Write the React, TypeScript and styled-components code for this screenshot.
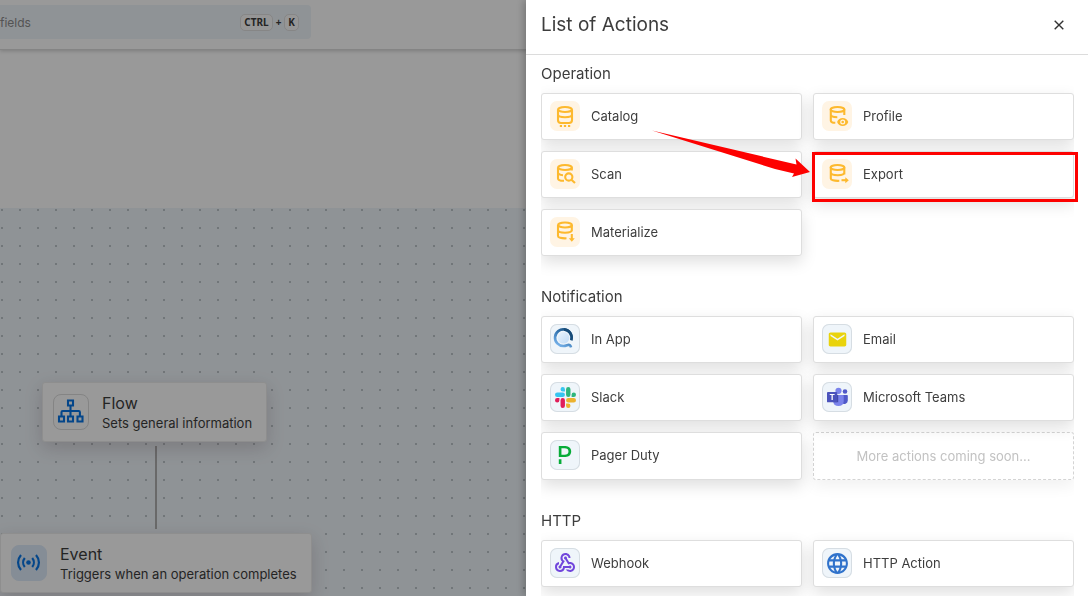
import React from "react";
import styled, { createGlobalStyle } from "styled-components";
import { MdEmail, MdLanguage, MdWebhook } from "react-icons/md";
import { SiPagerduty } from "react-icons/si";

const GlobalStyle = createGlobalStyle`
  * { box-sizing: border-box; }
  html, body, #root { height: 100%; }
  body {
    margin: 0;
    overflow: hidden;
    font-family: Inter, "Liberation Sans", sans-serif;
    color: #3d3d3d;
    background: #fff;
  }
  button, input { font: inherit; color: inherit; }
`;

const Page = styled.div`
  display: flex;
  flex-direction: column;
  min-height: 100%;
`;

const TopBar = styled.header`
  display: flex;
  height: 50px;
  padding: 5px 0 10px;
  border-bottom: 1px solid #dcdcdc;
  box-shadow: 0 1px 4px rgba(0, 0, 0, 0.2);
`;

const SearchBox = styled.label`
  display: flex;
  align-items: center;
  gap: 3px;
  width: 311px;
  height: 34px;
  padding-right: 12px;
  border-radius: 0 4px 4px 0;
  background: #eff5fa;
`;

const SearchInput = styled.input`
  flex: 1;
  min-width: 0;
  padding: 0;
  border: 0;
  background: none;
  font-size: 12px;
  &::placeholder { color: #8c8c8c; opacity: 1; }
`;

const Key = styled.kbd`
  padding: 0 3px;
  border: 1px solid #dfdfdf;
  border-radius: 5px;
  background: #fbfbfb;
  font: bold 10px/15px "Noto Sans", sans-serif;
`;

const Plus = styled.span`
  font: bold 10px/15px "Noto Sans", sans-serif;
`;

const Summary = styled.div`
  height: 158px;
`;

const Canvas = styled.main`
  position: relative;
  flex: 1;
  min-height: 388px;
  overflow: hidden;
  background: radial-gradient(circle, #bdc5ca 1px, transparent 1px) -7px -7px / 18px 18px #eff5fa;
`;

const Node = styled.article<{ $x: number; $y: number }>`
  position: absolute;
  left: ${(p) => p.$x}px;
  top: ${(p) => p.$y}px;
  display: flex;
  gap: 13px;
  height: 60px;
  padding: 11px 14px 11px 10px;
  border: 1px solid #ededed;
  border-radius: 3px;
  background: #fff;
  box-shadow: 0 6px 18px rgba(60, 30, 40, 0.18);
`;

const NodeIcon = styled.div<{ $tinted?: boolean }>`
  width: 36px;
  height: 36px;
  border: 1px solid ${(p) => (p.$tinted ? "#deebfa" : "#dcdcdc")};
  border-radius: 8px;
  background: ${(p) => (p.$tinted ? "#deebfa" : "#fff")};
  svg { display: block; margin: -1px; }
`;

const NodeTitle = styled.h3`
  margin: 0;
  font-size: 16px;
  line-height: 18px;
  font-weight: 400;
`;

const NodeText = styled.p`
  margin: 0;
  font-size: 13px;
  line-height: 22px;
  white-space: nowrap;
`;

const Edge = styled.div`
  position: absolute;
  left: 155px;
  top: 238px;
  width: 2px;
  height: 83px;
  background: #b0b0b0;
`;

const Backdrop = styled.div`
  position: fixed;
  inset: 0;
  background: rgba(0, 0, 0, 0.4);
`;

const Drawer = styled.aside`
  position: fixed;
  inset: 0 0 0 auto;
  display: flex;
  flex-direction: column;
  width: min(562px, 100%);
  background: #fff;
  box-shadow: -2px 0 8px rgba(0, 0, 0, 0.25);
`;

const DrawerHeader = styled.header`
  display: flex;
  align-items: center;
  justify-content: space-between;
  flex: none;
  height: 55px;
  padding: 0 20px 4px 15px;
  border-bottom: 1px solid #dcdcdc;
`;

const DrawerTitle = styled.h1`
  margin: 0;
  font-size: 19px;
  line-height: 28px;
  font-weight: 400;
`;

const CloseButton = styled.button`
  display: flex;
  padding: 4px;
  border: 0;
  background: none;
`;

/* The side gutters cover the card shadows, so only the gaps between cards are shaded. */
const DrawerBody = styled.div`
  position: relative;
  flex: 1;
  min-height: 0;
  padding: 0 14px 0 15px;
  overflow: hidden;
  &::before, &::after {
    content: "";
    position: absolute;
    z-index: 1;
    top: 0;
    bottom: 0;
    background: #fff;
  }
  &::before { left: 0; width: 15px; }
  &::after { right: 0; width: 14px; }
`;

const Section = styled.section`
  padding-top: 8px;
  & + & { padding-top: 30px; }
`;

const SectionTitle = styled.h2`
  margin: 0 0 8px;
  font-size: 15px;
  line-height: 22px;
  font-weight: 400;
`;

const Grid = styled.div`
  display: grid;
  grid-template-columns: 1fr 1fr;
  gap: 11px;
`;

const Card = styled.button`
  position: relative;
  display: flex;
  align-items: flex-start;
  gap: 11px;
  min-height: 47px;
  padding: 7px 8px;
  border: 1px solid #dedede;
  border-radius: 3px;
  background: #fff;
  box-shadow: 0 6px 16px rgba(0, 0, 0, 0.13);
  font-size: 13px;
  line-height: 30px;
  text-align: left;
`;

const Soon = styled.div`
  display: flex;
  align-items: center;
  justify-content: center;
  min-height: 48px;
  border: 1px dashed #d4d4d4;
  border-radius: 3px;
  background: #fff;
  box-shadow: 0 6px 16px rgba(0, 0, 0, 0.06);
  color: #c2c2c2;
  font-size: 13px;
`;

const Tile = styled.span<{ $warm?: boolean }>`
  display: flex;
  align-items: center;
  justify-content: center;
  flex: none;
  width: 30px;
  height: 30px;
  border-radius: 7px;
  background: ${(p) => (p.$warm ? "#fff4e4" : "#eff5fa")};
  box-shadow: ${(p) => (p.$warm ? "none" : "inset 0 0 0 1px #d6dde3")};
  svg { flex: none; display: block; }
`;

const Highlight = styled.span`
  position: absolute;
  z-index: 2;
  inset: 0 -5px -5px -2px;
  border: 3px solid #fd0100;
  pointer-events: none;
`;

const Arrow = styled.svg`
  position: absolute;
  right: 100%;
  top: -22px;
  margin-right: 4px;
  pointer-events: none;
`;

type DbKind = "catalog" | "profile" | "scan" | "export" | "materialize";

const dbExtras: Record<DbKind, React.ReactNode> = {
  catalog: (
    <>
      <path d="M8 8.500v10.500c0 2 1 3 3 3h8c2 0 3-1 3-3V8.500M8 13.500c0 1.800 3 2.700 7 2.700s7-.9 7-2.700" />
      <path d="M9.800 25h2.200M13.900 25h2.200M18 25h2.200" />
    </>
  ),
  profile: (
    <>
      <path d="M8.800 8.500v11c0 1.300 2 2.300 4.500 2.300M22.300 8.500v5.500M8.800 13.500c0 1.800 2.500 2.700 6.500 2.700" />
      <path fill="#fdb92e" stroke="none" fillRule="evenodd" d="M20.700 17c2.500 0 4.700 1.600 5.600 4-.9 2.400-3.100 4-5.600 4s-4.700-1.600-5.600-4c.9-2.400 3.100-4 5.600-4zm0 1.500a2.500 2.500 0 1 0 0 5 2.500 2.500 0 0 0 0-5zm0 1.200a1.300 1.300 0 1 1 0 2.600 1.300 1.300 0 0 1 0-2.600z" />
    </>
  ),
  scan: (
    <>
      <path d="M8 8.500v11c0 1.500 2.500 2.300 6 2.300M21.800 8.500v3M8 13.500c0 1.600 2 2.500 5 2.700" />
      <circle cx="18.800" cy="18" r="3.600" />
      <path d="M21.400 20.700l3.600 3.400" />
    </>
  ),
  export: (
    <>
      <path d="M8.800 8.500v11c0 1.600 3 2.500 8.500 2.300M22.300 8.500v7M8.800 13.500c0 1.800 3 2.700 7 2.700s6.500-.9 6.500-2.700" />
      <path d="M19.500 21.200h4.500" />
      <path fill="#fdb92e" stroke="none" d="M23.300 18.200l3.500 3-3.500 3z" />
    </>
  ),
  materialize: (
    <>
      <path d="M8 8v11c0 1.600 3 2.500 8.500 2.300M21.800 8v6M8 13c0 1.800 3 2.700 7 2.700s6.800-.9 6.800-2.700" />
      <path d="M21.800 17v5" />
      <path fill="#fdb92e" stroke="none" d="M18.800 21.300h6L21.800 24.700z" />
    </>
  ),
};

const DatabaseIcon = ({ kind }: { kind: DbKind }) => (
  <svg width="30" height="30" viewBox="0 0 30 30" fill="none" stroke="#fdb92e" strokeWidth="2.100">
    <ellipse cx={kind === "profile" || kind === "export" ? 15.5 : 15} cy={kind === "materialize" ? 8 : 8.5} rx="6.900" ry="2.500" />
    {dbExtras[kind]}
  </svg>
);

const InAppIcon = () => (
  <svg width="30" height="30" viewBox="0 0 30 30" fill="none">
    <defs>
      <linearGradient id="ring" x1="20" y1="5" x2="9" y2="23" gradientUnits="userSpaceOnUse">
        <stop offset="0" stopColor="#174b78" />
        <stop offset="0.450" stopColor="#3778b4" />
        <stop offset="1" stopColor="#7bb6ee" />
      </linearGradient>
      <linearGradient id="lens" x1="8" y1="8" x2="19" y2="19" gradientUnits="userSpaceOnUse">
        <stop offset="0" stopColor="#eaf4fd" />
        <stop offset="1" stopColor="#c2dcf6" />
      </linearGradient>
    </defs>
    <circle cx="13.500" cy="13.800" r="5.800" fill="url(#lens)" />
    <path d="M21.300 16A8.300 8.300 0 1 0 13.500 22c3.300 0 4.500-1.900 6.200-.9.700.4 1 1.200 1.400 2.300" stroke="url(#ring)" strokeWidth="2.600" />
    <path d="M21.300 16.300A8.300 8.300 0 0 0 14 5.400" stroke="#174b78" strokeWidth="2.600" />
  </svg>
);

const SlackIcon = () => (
  <svg width="21" height="21" viewBox="0 0 24 24">
    <path fill="#e01e5a" d="M5.042 15.165a2.528 2.528 0 0 1-2.520 2.523A2.528 2.528 0 0 1 0 15.165a2.527 2.527 0 0 1 2.522-2.520h2.520v2.520zM6.313 15.165a2.527 2.527 0 0 1 2.521-2.520 2.527 2.527 0 0 1 2.521 2.520v6.313A2.528 2.528 0 0 1 8.834 24a2.528 2.528 0 0 1-2.521-2.522v-6.313z" />
    <path fill="#36c5f0" d="M8.834 5.042a2.528 2.528 0 0 1-2.521-2.520A2.528 2.528 0 0 1 8.834 0a2.528 2.528 0 0 1 2.521 2.522v2.520H8.834zM8.834 6.313a2.528 2.528 0 0 1 2.521 2.521 2.528 2.528 0 0 1-2.521 2.521H2.522A2.528 2.528 0 0 1 0 8.834a2.528 2.528 0 0 1 2.522-2.521h6.312z" />
    <path fill="#2eb67d" d="M18.956 8.834a2.528 2.528 0 0 1 2.522-2.521A2.528 2.528 0 0 1 24 8.834a2.528 2.528 0 0 1-2.522 2.521h-2.522V8.834zM17.688 8.834a2.528 2.528 0 0 1-2.523 2.521 2.527 2.527 0 0 1-2.520-2.521V2.522A2.527 2.527 0 0 1 15.165 0a2.528 2.528 0 0 1 2.523 2.522v6.312z" />
    <path fill="#ecb22e" d="M15.165 18.956a2.528 2.528 0 0 1 2.523 2.522A2.528 2.528 0 0 1 15.165 24a2.527 2.527 0 0 1-2.520-2.522v-2.522h2.520zM15.165 17.688a2.527 2.527 0 0 1-2.520-2.523 2.526 2.526 0 0 1 2.520-2.520h6.313A2.527 2.527 0 0 1 24 15.165a2.528 2.528 0 0 1-2.522 2.523h-6.313z" />
  </svg>
);

const TeamsIcon = () => (
  <svg width="30" height="30" viewBox="0 0 30 30">
    <circle cx="23" cy="9.500" r="2.300" fill="#5059c9" />
    <path d="M19.500 13H25a.8.8 0 0 1 .8.800v4.700a3.500 3.500 0 0 1-6 2.400z" fill="#5059c9" />
    <circle cx="16.500" cy="8.800" r="3.100" fill="#7b83eb" />
    <path d="M11.500 13h9.400a.8.8 0 0 1 .8.800v5.600a5.300 5.300 0 0 1-10.500 0z" fill="#7b83eb" />
    <path d="M11.300 13h4.900v7.200h-4.900z" fill="#4048a5" />
    <rect x="5" y="10" width="10.300" height="10.300" rx="0.900" fill="#4b53bc" />
    <text x="10.200" y="18" textAnchor="middle" fontFamily="Inter, sans-serif" fontSize="8" fontWeight="700" fill="#fff">T</text>
  </svg>
);

const FlowIcon = () => (
  <svg width="36" height="36" viewBox="0 0 36 36" fill="none" stroke="#0876e6" strokeWidth="2.100">
    <path d="M15 6.500h5v5h-5zM6 22.500h5v5H6zM15 22.500h5v5h-5zM24.500 22.500h5v5h-5z" />
    <path d="M17.500 11.500v11M8.500 22.500V18.200c0-.8.400-1.200 1.200-1.200h16c.8 0 1.200.4 1.200 1.200v4.300" />
  </svg>
);

const EventIcon = () => (
  <svg width="36" height="36" viewBox="0 0 36 36" fill="none" stroke="#0876e6" strokeWidth="2.200">
    <circle cx="17.500" cy="17.500" r="2.300" fill="#0876e6" stroke="none" />
    <path d="M13.800 13c-2.200 2.600-2.200 6.400 0 9M21.200 13c2.200 2.600 2.200 6.400 0 9M10 10c-3.900 4.400-3.900 10.600 0 15M25 10c3.900 4.400 3.900 10.600 0 15" />
  </svg>
);

interface Action {
  label: string;
  icon: React.ReactNode;
  warm?: boolean;
  highlighted?: boolean;
}

const sections: { title: string; actions: Action[]; more?: string }[] = [
  {
    title: "Operation",
    actions: [
      { label: "Catalog", icon: <DatabaseIcon kind="catalog" />, warm: true },
      { label: "Profile", icon: <DatabaseIcon kind="profile" />, warm: true },
      { label: "Scan", icon: <DatabaseIcon kind="scan" />, warm: true },
      { label: "Export", icon: <DatabaseIcon kind="export" />, warm: true, highlighted: true },
      { label: "Materialize", icon: <DatabaseIcon kind="materialize" />, warm: true },
    ],
  },
  {
    title: "Notification",
    actions: [
      { label: "In App", icon: <InAppIcon /> },
      { label: "Email", icon: <MdEmail size={21} color="#e9d30c" /> },
      { label: "Slack", icon: <SlackIcon /> },
      { label: "Microsoft Teams", icon: <TeamsIcon /> },
      { label: "Pager Duty", icon: <SiPagerduty size={18} color="#06ac38" /> },
    ],
    more: "More actions coming soon...",
  },
  {
    title: "HTTP",
    actions: [
      { label: "Webhook", icon: <MdWebhook size={24} color="#7146dc" /> },
      { label: "HTTP Action", icon: <MdLanguage size={25} color="#2f72cb" /> },
    ],
  },
];

export default function App() {
  return (
    <>
      <GlobalStyle />
      <Page>
        <TopBar>
          <SearchBox>
            <SearchInput aria-label="Search" placeholder="fields" />
            <Key>CTRL</Key>
            <Plus>+</Plus>
            <Key>K</Key>
          </SearchBox>
        </TopBar>
        <Summary />
        <Canvas>
          <Edge />
          <Node $x={42} $y={174}>
            <NodeIcon><FlowIcon /></NodeIcon>
            <div>
              <NodeTitle>Flow</NodeTitle>
              <NodeText>Sets general information</NodeText>
            </div>
          </Node>
          <Node $x={0} $y={325}>
            <NodeIcon $tinted><EventIcon /></NodeIcon>
            <div>
              <NodeTitle>Event</NodeTitle>
              <NodeText>Triggers when an operation completes</NodeText>
            </div>
          </Node>
        </Canvas>
      </Page>
      <Backdrop />
      <Drawer role="dialog" aria-label="List of Actions">
        <DrawerHeader>
          <DrawerTitle>List of Actions</DrawerTitle>
          <CloseButton aria-label="Close">
            <svg width="10" height="10" viewBox="0 0 10 10" stroke="#333" strokeWidth="1.400">
              <path d="M0.700 0.700l8.600 8.600M9.300 0.700L0.700 9.300" />
            </svg>
          </CloseButton>
        </DrawerHeader>
        <DrawerBody>
          {sections.map((s) => (
            <Section key={s.title}>
              <SectionTitle>{s.title}</SectionTitle>
              <Grid>
                {s.actions.map((a) => (
                  <Card key={a.label} type="button">
                    <Tile $warm={a.warm}>{a.icon}</Tile>
                    {a.label}
                    {a.highlighted && (
                      <>
                        <Highlight />
                        <Arrow width="158" height="50" viewBox="0 0 158 50" aria-hidden="true">
                          <path fill="#fd0100" d="M0 0.500L144.500 34.500L143.500 28.500L158 42L140 47L142 43.500L123 39z" />
                        </Arrow>
                      </>
                    )}
                  </Card>
                ))}
                {s.more && <Soon>{s.more}</Soon>}
              </Grid>
            </Section>
          ))}
        </DrawerBody>
      </Drawer>
    </>
  );
}
